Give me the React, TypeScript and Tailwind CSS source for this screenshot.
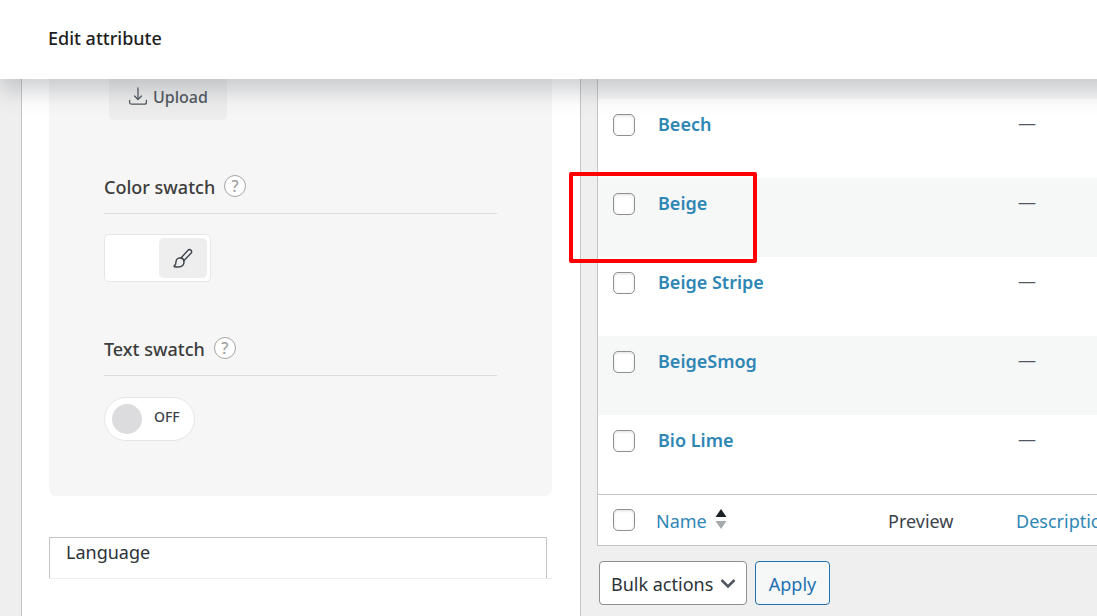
import React from 'react';

interface Term {
  name: string;
  description: string;
}

const terms: Term[] = [
  { name: 'Beech', description: '—' },
  { name: 'Beige', description: '—' },
  { name: 'Beige Stripe', description: '—' },
  { name: 'BeigeSmog', description: '—' },
  { name: 'Bio Lime', description: '—' },
];

const UploadIcon = () => (
  <svg className="w-5 h-5" viewBox="0 0 20 20" fill="none" stroke="currentColor" strokeWidth="1.3" strokeLinecap="round" strokeLinejoin="round" aria-hidden="true">
    <path d="M10 1v11.5M6.5 9 10 12.5 13.5 9" />
    <path d="M1.6 13.5v1.7a2 2 0 0 0 2 2h12.8a2 2 0 0 0 2-2v-1.7" />
  </svg>
);

const BrushIcon = () => (
  <svg className="w-5 h-5" viewBox="0 0 20 20" fill="none" stroke="currentColor" strokeWidth="1.4" strokeLinecap="round" strokeLinejoin="round" aria-hidden="true">
    <path d="M8 10 15 2.200a2 2 0 0 1 3 0c.8.9.8 2.100 0 3L10.800 12.700" />
    <path d="M8 10c1.500.2 2.600 1.300 2.800 2.700" />
    <path d="M8 10c-2.900-.6-5 1.200-5 3.700 0 2-.4 3.200-1.700 4-.4.300-.3.900.3 1 3.300.5 6.800.3 8.300-1.500 1-1.300 1.300-2.900.9-4.500" />
  </svg>
);

const Checkbox = ({ label }: { label: string }) => (
  <input
    type="checkbox"
    aria-label={label}
    className="block appearance-none w-[22px] h-[22px] bg-white border border-[#8c8f94] rounded-[5px] shadow-[inset_0_1px_3px_rgba(0,0,0,0.12)]"
  />
);

const SectionTitle = ({ title }: { title: string }) => (
  <div className="flex items-center gap-[9px] pb-4 border-b border-[#dcdcde]">
    <h3 className="pt-0.5 text-lg leading-5 font-medium text-[#3c3c3c]">{title}</h3>
    <button
      type="button"
      aria-label={`Help: ${title}`}
      className="w-[22px] h-[22px] flex items-center justify-center rounded-full border border-[#a5a5a5] bg-white text-base leading-5 font-medium text-[#a0a0a0]"
    >
      ?
    </button>
  </div>
);

const SwatchPanel = () => (
  <section className="shrink-0 w-[560px] pl-[27px] pr-7 bg-white border-x border-[#c3c4c7]">
    <div className="px-[55px] pb-[55px] bg-[#f6f6f6] rounded-b-lg">
      <button
        type="button"
        className="ml-[5px] h-[41px] px-[19px] pb-1.5 flex items-center gap-[5px] bg-[#ededed] rounded-b-[5px] text-base font-medium text-[#50575e]"
      >
        <UploadIcon />
        Upload
      </button>

      <div className="mt-[55px]">
        <SectionTitle title="Color swatch" />
        <div className="mt-5 w-[107px] h-12 p-[3px] flex justify-end bg-white border border-[#e6e6e6] rounded-[5px]">
          <button
            type="button"
            aria-label="Pick color"
            className="w-12 h-10 flex items-center justify-center bg-[#eeeeee] rounded-[5px] text-[#3c434a]"
          >
            <BrushIcon />
          </button>
        </div>
      </div>

      <div className="mt-[55px]">
        <SectionTitle title="Text swatch" />
        <label className="mt-[21px] w-[91px] h-11 pl-[7px] flex items-center gap-3 bg-white border border-[#e6e6e6] rounded-full">
          <input type="checkbox" role="switch" className="appearance-none w-[30px] h-[30px] rounded-full bg-[#dcdcde]" />
          <span className="pb-1 text-sm font-medium text-[#3c434a]">OFF</span>
        </label>
      </div>
    </div>

    {/* Language box */}
    <div className="mt-[41px]">
      <div className="mr-[5px] h-[41px] pl-4 border border-b-0 border-[#c3c4c7]">
        <h2 className="text-lg leading-7 text-[#2c3338]">Language</h2>
      </div>
      <div className="h-[37px] border-t border-[#ececec]" />
    </div>
  </section>
);

const SortArrows = () => (
  <svg className="w-3 h-5 mb-1" viewBox="0 0 12 20" aria-hidden="true">
    <path d="M6 0 11.5 8H.5z" fill="#1d2327" />
    <path d="M6 20 .5 12h11z" fill="#a7aaad" />
  </svg>
);

const TermsTable = () => (
  <div className="overflow-hidden bg-white border-l border-b border-[#c3c4c7]">
    <table className="table-fixed w-[640px] text-left border-collapse">
      <colgroup>
        <col className="w-[58px]" />
        <col className="w-[232px]" />
        <col className="w-[128px]" />
        <col />
      </colgroup>
      <tbody>
        <tr className="h-5 bg-[#f6f7f7]">
          <td colSpan={4} />
        </tr>
        {terms.map((term) => (
          <tr key={term.name} className="h-[79px] align-top even:bg-white odd:bg-[#f6f7f7]">
            <td className="pl-[15px] pt-[15px]">
              <Checkbox label={`Select ${term.name}`} />
            </td>
            <td className="pl-[2px] pt-[13px]">
              <a href="#" className="text-lg leading-6 font-semibold text-[#2e86b5]">{term.name}</a>
            </td>
            <td />
            <td className="pl-[2px] pt-3 text-lg leading-6 text-[#50575e]">{term.description}</td>
          </tr>
        ))}
      </tbody>
      <tfoot>
        <tr className="h-[51px] border-t border-[#c3c4c7] text-lg text-[#3c434a]">
          <td className="pl-[15px]">
            <Checkbox label="Select all" />
          </td>
          <th className="pt-0.5 font-normal">
            <a href="#" className="flex items-center gap-2 text-[#2e86b5]">
              Name
              <SortArrows />
            </a>
          </th>
          <th className="pt-0.5 font-normal">Preview</th>
          <th className="pt-0.5 font-normal">
            <a href="#" className="text-[#2e86b5]">Description</a>
          </th>
        </tr>
      </tfoot>
    </table>
  </div>
);

const BulkActions = () => (
  <div className="mt-[15px] ml-[2px] flex gap-2">
    <div className="relative">
      <select
        aria-label="Bulk actions"
        className="appearance-none w-[148px] h-11 pl-[11px] pt-0.5 bg-white border border-[#8c8f94] rounded text-lg text-[#2c3338]"
      >
        <option>Bulk actions</option>
        <option>Delete</option>
      </select>
      <svg className="absolute right-[11px] top-[17px] w-4 h-3 pointer-events-none" viewBox="0 0 16 12" fill="none" stroke="#50575e" strokeWidth="2.6" aria-hidden="true">
        <path d="M1.5 2 8 8.5 14.5 2" />
      </svg>
    </div>
    <button type="button" className="w-[75px] h-11 pt-0.5 bg-[#f6f7f7] border border-[#2271b1] rounded text-lg text-[#2271b1]">
      Apply
    </button>
  </div>
);

export default function App() {
  return (
    <div className="min-h-screen overflow-hidden flex flex-col bg-[#efefef] font-['Noto_Sans','Open_Sans',sans-serif]">
      <header className="relative z-10 h-[79px] -mr-10 pl-12 pb-1 flex items-center bg-white shadow-[0_11px_22px_rgba(85,93,102,0.3)]">
        <h1 className="text-lg font-medium text-[#1e1e1e]">Edit attribute</h1>
      </header>

      <main className="flex-1 flex pl-[21px]">
        <SwatchPanel />
        <div className="relative flex-1 min-w-0 pl-4">
          <TermsTable />
          <BulkActions />
          {/* Highlight around the Beige term */}
          <div className="absolute -left-3 top-[93px] w-[188px] h-[91px] border-4 border-[#ff0000] rounded-xs pointer-events-none" />
        </div>
      </main>
    </div>
  );
}
